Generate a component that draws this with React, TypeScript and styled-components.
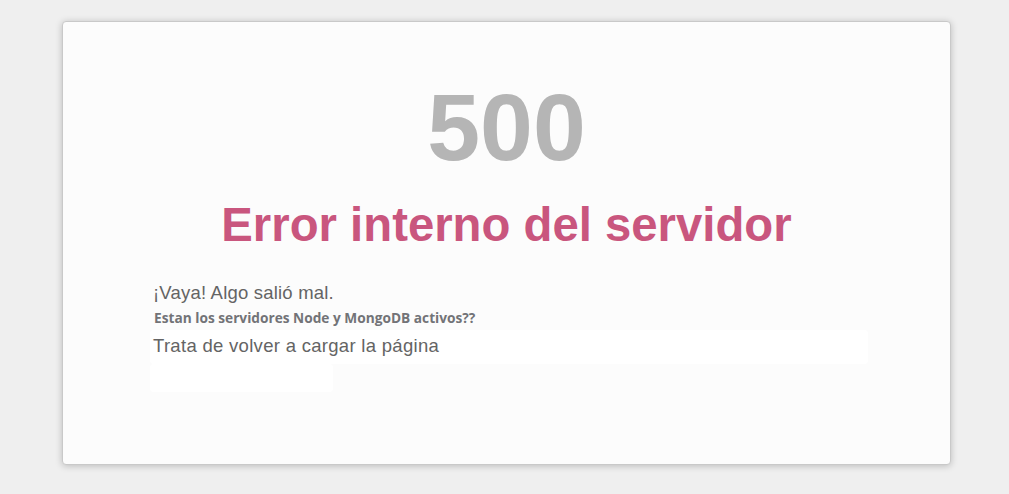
import React from 'react';
import styled, { createGlobalStyle } from 'styled-components';

const GlobalStyle = createGlobalStyle`
  html, body {
    margin: 0;
    padding: 0;
    background: #efefef;
  }
  body {
    font-family: "Liberation Sans", Arial, Helvetica, sans-serif;
  }
`;

const Page = styled.div`
  width: 1009px;
  height: 494px;
  padding-top: 21px;
  padding-left: 62px;
  box-sizing: border-box;
`;

const Card = styled.div`
  width: 889px;
  height: 444px;
  box-sizing: border-box;
  background: #fcfcfc;
  border: 1px solid #c9c9c9;
  border-radius: 4px;
  box-shadow: 0 1px 7px rgba(0, 0, 0, 0.22);
  padding: 58px 0 0 87px;
  display: flex;
  flex-direction: column;
`;

const Code = styled.h1`
  margin: 0 87px 0 0;
  font-size: 95px;
  line-height: 1;
  font-weight: bold;
  color: #b5b5b5;
  text-align: center;
`;

const Title = styled.h2`
  margin: 26px 87px 0 0;
  font-size: 47.3px;
  line-height: 1;
  font-weight: bold;
  color: #c9567e;
  text-align: center;
`;

const Text = styled.p`
  margin: 34px 0 0 3px;
  font-size: 18.5px;
  line-height: 1.2;
  letter-spacing: 0.2px;
  color: #646464;
`;

const Hint = styled.p`
  margin: 6px 0 0 4px;
  font-family: "Open Sans", "Noto Sans", sans-serif;
  font-weight: bold;
  font-size: 13.7px;
  line-height: 1.2;
  color: #727377;
`;

const Blank = styled.div<{ $w: number; $h: number }>`
  width: ${(p) => p.$w}px;
  height: ${(p) => p.$h}px;
  box-sizing: border-box;
  background: #ffffff;
  border-radius: 4px;
`;

const Reload = styled(Blank)`
  margin-top: 3px;
  padding-left: 3px;
  font-size: 18.5px;
  line-height: 32px;
  letter-spacing: 0.3px;
  color: #646464;
`;

export default function App() {
  return (
    <Page>
      <GlobalStyle />
      <Card>
        <Code>500</Code>
        <Title>Error interno del servidor</Title>
        <Text>¡Vaya! Algo salió mal.</Text>
        <Hint>Estan los servidores Node y MongoDB activos??</Hint>
        <Reload $w={718} $h={34}>Trata de volver a cargar la página</Reload>
        <Blank $w={183} $h={28} />
      </Card>
    </Page>
  );
}
